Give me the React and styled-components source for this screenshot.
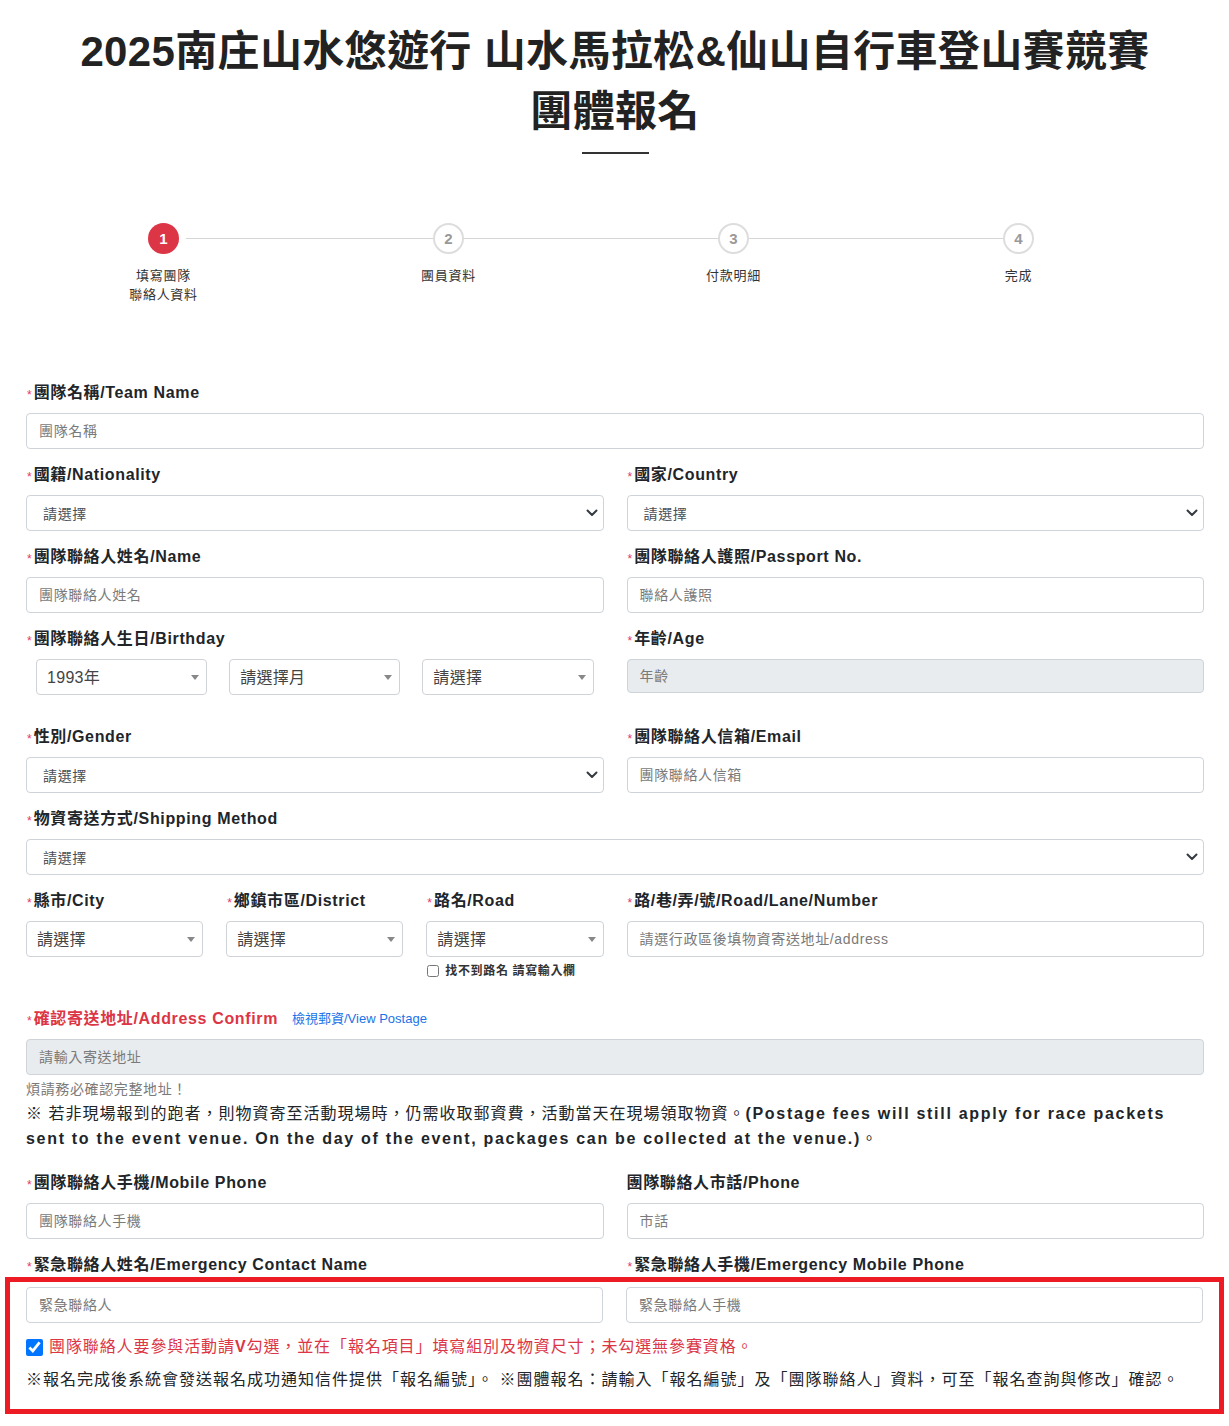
import React from 'react';
import styled, { createGlobalStyle } from 'styled-components';

const GlobalStyle = createGlobalStyle`
  * { box-sizing: border-box; }
  body {
    margin: 0;
    background: #fff;
    color: #212529;
    font-family: "Liberation Sans", Arial, "Noto Sans CJK TC", sans-serif;
    letter-spacing: 0.04em;
  }
`;

const Page = styled.div`
  padding: 22px 25px 12px 26px;
`;

const Title = styled.h1`
  margin: 0;
  text-align: center;
  font-size: 42px;
  line-height: 60px;
  font-weight: 700;
  letter-spacing: 0.35px;
  color: #222;
`;

const TitleRule = styled.div`
  width: 67px;
  height: 2px;
  background: #333;
  margin: 10px auto 0;
`;

const Stepper = styled.ol`
  list-style: none;
  margin: 69px 0 0 -5px;
  padding: 0;
  display: grid;
  grid-template-columns: repeat(4, 285px);
`;

const Step = styled.li`
  position: relative;
  display: flex;
  flex-direction: column;
  align-items: center;
  &:not(:last-child)::after {
    content: '';
    position: absolute;
    top: 15px;
    left: 50%;
    width: 100%;
    height: 1px;
    background: #d6d6d6;
    z-index: 0;
  }
`;

const StepDot = styled.span`
  position: relative;
  z-index: 1;
  width: 31px;
  height: 31px;
  border-radius: 50%;
  display: flex;
  align-items: center;
  justify-content: center;
  font: 700 15px "Liberation Sans", Arial, sans-serif;
  letter-spacing: 0;
  ${(p) =>
    p.$active
      ? 'background:#dc3545;color:#fff;box-shadow:0 0 0 7px #fff;'
      : 'background:#fff;color:#999;border:2px solid #ddd;'}
`;

const StepLabel = styled.span`
  margin-top: 12px;
  font-size: 13px;
  line-height: 19px;
  letter-spacing: 0.7px;
  color: #333;
  text-align: center;
`;

const Form = styled.form`
  margin-top: 77px;
`;

const Row = styled.div`
  display: grid;
  grid-template-columns: 1fr 1fr;
  column-gap: 23px;
  align-items: start;
`;

const SubRow = styled.div`
  display: grid;
  grid-template-columns: repeat(3, 1fr);
  column-gap: 23px;
  align-items: start;
`;

const Field = styled.div`
  margin-bottom: ${(p) => (p.$mb !== undefined ? p.$mb : 14)}px;
`;

const Label = styled.label`
  display: flex;
  align-items: center;
  font-size: 16px;
  font-weight: 700;
  line-height: 24px;
  margin-bottom: ${(p) => (p.$flush ? 0 : 8)}px;
  color: ${(p) => (p.$danger ? '#dc3545' : '#212529')};
  white-space: nowrap;
`;

const Req = styled.span`
  color: #e8336b;
  font-size: 12px;
  line-height: 1;
  margin: 4px 2px 0 1px;
  font-weight: 400;
  letter-spacing: 0;
`;

const PostageLink = styled.a`
  margin-left: 14px;
  font-size: 13px;
  font-weight: 400;
  letter-spacing: 0;
  color: #1a73e8;
  text-decoration: none;
`;

const TextInput = styled.input`
  display: block;
  width: 100%;
  height: ${(p) => (p.$short ? 34 : 36)}px;
  padding: 0 12px;
  border: 1px solid #ced4da;
  border-radius: 4px;
  font: 14px "Liberation Sans", Arial, "Noto Sans CJK TC", sans-serif;
  letter-spacing: inherit;
  color: #495057;
  background: ${(p) => (p.disabled ? '#e9ecef' : '#fff')};
  outline: none;
  &::placeholder {
    color: #7a7a7a;
  }
`;

const SelectBox = styled.div`
  display: flex;
  align-items: center;
  justify-content: space-between;
  height: 36px;
  padding: 0 5px 0 16px;
  border: 1px solid #ced4da;
  border-radius: 4px;
  font-size: 14px;
  color: #495057;
  background: #fff;
`;

const Select2Box = styled.div`
  display: flex;
  align-items: center;
  justify-content: space-between;
  height: 36px;
  padding: 0 7px 3px 10px;
  border: 1px solid #cfd3d8;
  border-radius: 4px;
  font-size: 16px;
  letter-spacing: 0.3px;
  color: #444;
  background: #fff;
`;

const Caret = styled.span`
  width: 0;
  height: 0;
  margin-top: 4px;
  border-left: 4px solid transparent;
  border-right: 4px solid transparent;
  border-top: 5px solid #888;
`;

const BirthGrid = styled.div`
  display: grid;
  grid-template-columns: repeat(3, 1fr);
  column-gap: 22px;
  padding: 0 10px;
`;

const SmallCheck = styled.label`
  display: flex;
  align-items: center;
  gap: 6px;
  margin-top: 6px;
  font-size: 12px;
  line-height: 16px;
  font-weight: 700;
  color: #333;
  input {
    width: 12px;
    height: 12px;
    margin: 0 0 0 1px;
  }
`;

const HelpText = styled.div`
  margin-top: 4px;
  font-size: 14px;
  line-height: 20px;
  color: #7a7a7a;
`;

const Note = styled.p`
  margin: 2px 0 20px;
  font-size: 16px;
  line-height: 25px;
  letter-spacing: 1px;
  color: #212529;
  b {
    letter-spacing: 1.7px;
  }
`;

const Highlight = styled.section`
  margin: 0 -20px 0 -21px;
  border: 5px solid #ed1c24;
  padding: 5px 16px 17px;
`;

const AgreeLine = styled.label`
  display: flex;
  align-items: center;
  gap: 6px;
  margin-top: 12px;
  font-size: 16px;
  line-height: 24px;
  letter-spacing: 0.9px;
  color: #dc3545;
  input {
    width: 17px;
    height: 17px;
    margin: 0;
    accent-color: #0075ff;
  }
`;

const BottomNote = styled.p`
  margin: 9px 0 0;
  font-size: 16px;
  line-height: 24px;
  letter-spacing: 1px;
  color: #212529;
`;

function Chevron() {
  return (
    <svg width="12" height="8" viewBox="0 0 12 8" aria-hidden="true">
      <path d="M1.5 1.5L6 6l4.5-4.5" fill="none" stroke="#343a40" strokeWidth="2" strokeLinecap="round" strokeLinejoin="round" />
    </svg>
  );
}

function FieldLabel({ children, required = true, ...rest }) {
  return (
    <Label {...rest}>
      {required && <Req>*</Req>}
      {children}
    </Label>
  );
}

function Select({ value = '請選擇' }) {
  return (
    <SelectBox>
      <span>{value}</span>
      <Chevron />
    </SelectBox>
  );
}

function Select2({ value = '請選擇' }) {
  return (
    <Select2Box>
      <span>{value}</span>
      <Caret />
    </Select2Box>
  );
}

const steps = [
  { n: 1, label: ['填寫團隊', '聯絡人資料'], active: true },
  { n: 2, label: ['團員資料'] },
  { n: 3, label: ['付款明細'] },
  { n: 4, label: ['完成'] },
];

export default function App() {
  return (
    <Page>
      <GlobalStyle />
      <Title>
        2025南庄山水悠遊行 山水馬拉松&amp;仙山自行車登山賽競賽
        <br />
        團體報名
      </Title>
      <TitleRule />

      <Stepper>
        {steps.map((s) => (
          <Step key={s.n}>
            <StepDot $active={s.active}>{s.n}</StepDot>
            <StepLabel>
              {s.label.map((l, i) => (
                <React.Fragment key={i}>
                  {i > 0 && <br />}
                  {l}
                </React.Fragment>
              ))}
            </StepLabel>
          </Step>
        ))}
      </Stepper>

      <Form onSubmit={(e) => e.preventDefault()}>
        <Field>
          <FieldLabel>團隊名稱/Team Name</FieldLabel>
          <TextInput placeholder="團隊名稱" readOnly />
        </Field>

        <Row>
          <Field>
            <FieldLabel>國籍/Nationality</FieldLabel>
            <Select />
          </Field>
          <Field>
            <FieldLabel>國家/Country</FieldLabel>
            <Select />
          </Field>
        </Row>

        <Row>
          <Field>
            <FieldLabel>團隊聯絡人姓名/Name</FieldLabel>
            <TextInput placeholder="團隊聯絡人姓名" readOnly />
          </Field>
          <Field>
            <FieldLabel>團隊聯絡人護照/Passport No.</FieldLabel>
            <TextInput placeholder="聯絡人護照" readOnly />
          </Field>
        </Row>

        <Row>
          <Field $mb={30}>
            <FieldLabel>團隊聯絡人生日/Birthday</FieldLabel>
            <BirthGrid>
              <Select2 value="1993年" />
              <Select2 value="請選擇月" />
              <Select2 value="請選擇" />
            </BirthGrid>
          </Field>
          <Field $mb={30}>
            <FieldLabel>年齡/Age</FieldLabel>
            <TextInput placeholder="年齡" disabled $short />
          </Field>
        </Row>

        <Row>
          <Field>
            <FieldLabel>性別/Gender</FieldLabel>
            <Select />
          </Field>
          <Field>
            <FieldLabel>團隊聯絡人信箱/Email</FieldLabel>
            <TextInput placeholder="團隊聯絡人信箱" readOnly />
          </Field>
        </Row>

        <Field>
          <FieldLabel>物資寄送方式/Shipping Method</FieldLabel>
          <Select />
        </Field>

        <Row>
          <SubRow>
            <Field>
              <FieldLabel>縣市/City</FieldLabel>
              <Select2 />
            </Field>
            <Field>
              <FieldLabel>鄉鎮市區/District</FieldLabel>
              <Select2 />
            </Field>
            <Field $mb={28}>
              <FieldLabel>路名/Road</FieldLabel>
              <Select2 />
              <SmallCheck>
                <input type="checkbox" readOnly />
                找不到路名 請寫輸入欄
              </SmallCheck>
            </Field>
          </SubRow>
          <Field>
            <FieldLabel>路/巷/弄/號/Road/Lane/Number</FieldLabel>
            <TextInput placeholder="請選行政區後填物資寄送地址/address" readOnly />
          </Field>
        </Row>

        <Field $mb={0}>
          <FieldLabel $danger>
            確認寄送地址/Address Confirm
            <PostageLink href="#">檢視郵資/View Postage</PostageLink>
          </FieldLabel>
          <TextInput placeholder="請輸入寄送地址" disabled />
          <HelpText>煩請務必確認完整地址！</HelpText>
        </Field>
        <Note>
          ※ 若非現場報到的跑者，則物資寄至活動現場時，仍需收取郵資費，活動當天在現場領取物資。
          <b>
            (Postage fees will still apply for race packets sent to the event venue. On the day of the event,
            packages can be collected at the venue.)
          </b>
          。
        </Note>

        <Row>
          <Field>
            <FieldLabel>團隊聯絡人手機/Mobile Phone</FieldLabel>
            <TextInput placeholder="團隊聯絡人手機" readOnly />
          </Field>
          <Field>
            <FieldLabel required={false}>團隊聯絡人市話/Phone</FieldLabel>
            <TextInput placeholder="市話" readOnly />
          </Field>
        </Row>

        <Row>
          <FieldLabel $flush>緊急聯絡人姓名/Emergency Contact Name</FieldLabel>
          <FieldLabel $flush>緊急聯絡人手機/Emergency Mobile Phone</FieldLabel>
        </Row>

        <Highlight>
          <Row>
            <TextInput placeholder="緊急聯絡人" readOnly />
            <TextInput placeholder="緊急聯絡人手機" readOnly />
          </Row>
          <AgreeLine>
            <input type="checkbox" defaultChecked />
            <span>
              團隊聯絡人要參與活動請<strong>V</strong>勾選，並在「報名項目」填寫組別及物資尺寸；未勾選無參賽資格。
            </span>
          </AgreeLine>
          <BottomNote>
            ※報名完成後系統會發送報名成功通知信件提供「報名編號」。 ※團體報名：請輸入「報名編號」及「團隊聯絡人」資料，可至「報名查詢與修改」確認。
          </BottomNote>
        </Highlight>
      </Form>
    </Page>
  );
}
